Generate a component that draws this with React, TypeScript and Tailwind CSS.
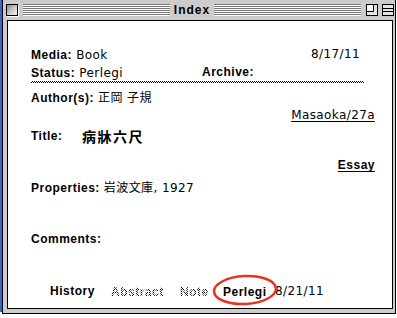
const label = "font-['Liberation_Sans',Arial,sans-serif] font-bold text-[12px] tracking-[0.5px] text-black";
const value = "font-['DejaVu_Sans','Noto_Sans_CJK_JP',sans-serif] text-[12px] tracking-[0.4px] text-black";
const dither = "bg-[repeating-conic-gradient(#000_0_25%,transparent_0_50%)] bg-[length:2px_2px]";

const Stripes = () => (
  <div className="flex-1 h-[12px] bg-[repeating-linear-gradient(to_bottom,#777_0px,#777_1px,#fff_1px,#fff_2px)]" />
);

const TitleBar = () => {
  return (
    <div className="h-[20px] flex items-start pt-[4px] pl-[3px] pr-[1px]">
      <div className="w-[12px] h-[12px] border border-black bg-gradient-to-br from-[#8a8a8a] via-[#c8c8c8] to-[#f4f4f4] shadow-[1px_1px_0_#fff]" />
      <div className="flex flex-1 items-start ml-[5px]">
        <Stripes />
        <span className={`${label} tracking-[1px] leading-[12px] px-[4px]`}>Index</span>
        <Stripes />
      </div>
      <svg width="12" height="12" viewBox="0 0 12 12" className="ml-[5px]">
        <rect x="0.5" y="0.5" width="11" height="11" fill="#e4e4e4" stroke="#000" />
        <path d="M7.5 1 V7.5 H1" fill="none" stroke="#000" />
        <path d="M1 1 H7 V7 H1 Z" fill="#f8f8f8" />
      </svg>
      <svg width="12" height="12" viewBox="0 0 12 12" className="ml-[4px]">
        <rect x="0.5" y="0.5" width="11" height="11" fill="#e4e4e4" stroke="#000" />
        <path d="M1 4.5 H11 M1 7.5 H11" fill="none" stroke="#000" />
      </svg>
    </div>
  );
};

const Row = ({ children, className = "" }: { children: React.ReactNode; className?: string }) => (
  <div className={`h-[16px] leading-[16px] flex items-center ${className}`}>{children}</div>
);

export default function App() {
  return (
    <div className="w-[397px] h-[318px] bg-white flex overflow-hidden">
      <div className="w-[2px] h-[312px] bg-[#3b63c9]" />
      <div className="w-[394px] h-[314px] flex flex-col bg-[#cccccc] border-l border-r border-b border-black">
        <TitleBar />
        <div className="flex-1 ml-[4px] mr-[2px] mb-[4px] bg-white border border-black flex flex-col pt-[25px] pl-[23px] pr-[17px]">
          <Row className="justify-between">
            <span>
              <span className={label}>Media:</span> <span className={value}>Book</span>
            </span>
            <span className={`${value} mr-[15px]`}>8/17/11</span>
          </Row>
          <Row className="mt-[2px]">
            <span className="w-[171px]">
              <span className={label}>Status:</span> <span className={value}>Perlegi</span>
            </span>
            <span className={label}>Archive:</span>
          </Row>
          <div className={`mt-[1px] h-[2px] mr-[11px] ${dither}`} />
          <Row className="mt-[7px]">
            <span className={label}>Author(s):</span>
            <span className={`${value} ml-[4px]`}>正岡 子規</span>
          </Row>
          <Row className="mt-[1px] justify-end">
            <span className={`${value} underline underline-offset-2`}>Masaoka/27a</span>
          </Row>
          <Row className="mt-[5px]">
            <span className={`${label} w-[51px]`}>Title:</span>
            <span className="font-['Noto_Sans_CJK_JP',sans-serif] font-bold text-[14px] tracking-[1.5px] leading-[16px]">病牀六尺</span>
          </Row>
          <Row className="mt-[13px] justify-end">
            <span className={`${label} underline underline-offset-2`}>Essay</span>
          </Row>
          <Row className="mt-[7px]">
            <span className={label}>Properties:</span>
            <span className={`${value} ml-[4px]`}>岩波文庫, 1927</span>
          </Row>
          <Row className="mt-[35px]">
            <span className={label}>Comments:</span>
          </Row>
          <Row className="mt-[36px] pl-[19px]">
            <span className={`${label} w-[61px]`}>History</span>
            <span className="w-[69px]">
              <span className={`${label} ${dither} bg-clip-text text-transparent`}>Abstract</span>
            </span>
            <span className="w-[43px]">
              <span className={`${label} ${dither} bg-clip-text text-transparent`}>Note</span>
            </span>
            <span className="w-[52px] relative">
              <span className={label}>Perlegi</span>
              <svg width="68" height="34" viewBox="0 0 68 34" className="absolute left-[-11px] top-[-9px] pointer-events-none">
                <ellipse cx="33" cy="17" rx="31" ry="14" fill="none" stroke="#e8321e" strokeWidth="2.5" transform="rotate(-3 33 17)" />
              </svg>
            </span>
            <span className={value}>8/21/11</span>
          </Row>
        </div>
      </div>
    </div>
  );
}
